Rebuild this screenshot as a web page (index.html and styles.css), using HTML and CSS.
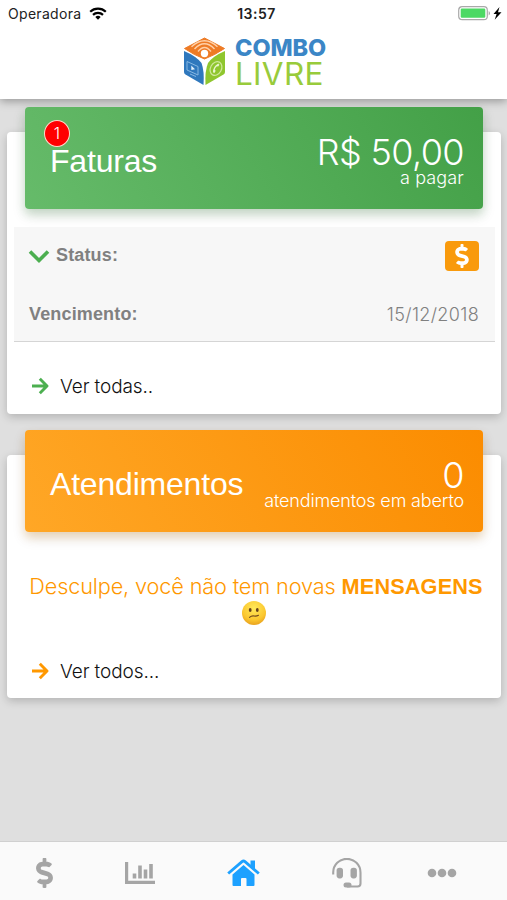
FILE: index.html
```html
<!DOCTYPE html>
<html lang="pt-BR">
<head>
<meta charset="utf-8">
<title>Combo Livre</title>
<link rel="stylesheet" href="styles.css">
</head>
<body>
<svg class="defs" width="0" height="0">
  <symbol id="dollar" viewBox="0 0 288 512"><path fill="currentColor" d="M209.2 233.4l-108-31.6C88.7 198.2 80 186.5 80 173.5c0-16.3 13.2-29.5 29.5-29.5h66.3c12.2 0 24.2 3.7 34.2 10.5 6.1 4.1 14.3 3.1 19.5-2l34.8-34c7.1-6.9 6.1-18.4-1.8-24.5C238 74.8 207.4 64.1 176 64V16c0-8.8-7.2-16-16-16h-32c-8.800 0-16 7.200-16 16v48h-2.500C45.800 64-5.400 118.700.500 183.600c4.200 46.100 39.400 83.600 83.800 96.600l102.500 30c12.500 3.700 21.200 15.300 21.200 28.300 0 16.300-13.200 29.500-29.500 29.500h-66.300C100 368 88 364.300 78 357.500c-6.100-4.100-14.300-3.100-19.500 2l-34.800 34c-7.100 6.900-6.100 18.400 1.800 24.500 24.500 19.200 55.100 29.900 86.500 30v48c0 8.800 7.200 16 16 16h32c8.800 0 16-7.200 16-16v-48.200c46.600-.900 90.300-28.600 105.700-72.700 21.500-61.600-14.600-124.800-72.500-141.700z"/></symbol>
  <symbol id="arrow" viewBox="0 0 18 18"><path d="M1 9H15.500M8.800 1.800 16 9 8.800 16.200" fill="none" stroke="currentColor" stroke-width="2.900" stroke-linejoin="round"/></symbol>
</svg>
<header class="header">
  <div class="status-bar">
    <div class="carrier"><span>Operadora</span>
      <svg width="18" height="13" viewBox="0 0 18 13"><g fill="none" stroke="#000" stroke-width="2.200"><path d="M1.200 4.800A11.200 11.200 0 0 1 16.800 4.800"/><path d="M4 7.900A7.200 7.200 0 0 1 14 7.900"/></g><path d="M9 12.800 6.300 10.100A3.900 3.900 0 0 1 11.700 10.100Z"/></svg>
    </div>
    <div class="clock">13:57</div>
    <svg class="battery" width="44" height="15" viewBox="0 0 44 15"><rect x=".7" y=".7" width="28.600" height="13" rx="3.500" fill="#fff" stroke="#a9a9a9" stroke-width="1.200"/><rect x="2.700" y="2.600" width="24.600" height="9.200" rx="1.200" fill="#4cd964"/><path d="M30.700 5v4.500q1.300-.8 1.300-2.250T30.700 5" fill="#aaa"/><path d="M41.500 1 35.500 8h3.100l-1.900 5.700L43.500 6.300H40Z"/></svg>
  </div>
  <div class="logo">
    <svg width="43" height="50" viewBox="0 0 43 50">
      <path d="M21.500 1 41.500 11.500Q32 18 21.500 22 11 18 1.500 11.500Z" fill="#ee7b25" stroke="#ee7b25" stroke-linejoin="round"/>
      <path d="M1 14Q13 19 18.500 26 21.500 34 20.500 48L2.500 37.500Q1 36.500 1 35Z" fill="#2f78bd"/>
      <path d="M42 14Q30 19 25 26 21.700 34 22.500 48L40.500 37.500Q42 36.500 42 35Z" fill="#8fc62e"/>
      <circle cx="21.500" cy="16.500" r="3.700" fill="#fff"/>
      <g fill="none" stroke="#ffd0a8" stroke-width="1.400"><path d="M15 14.500Q21.500 6.500 28 14.500"/><path d="M11.500 12Q21.500 1.500 31.500 12"/><path d="M8.500 9.800Q21.500-2.500 34.500 9.800"/></g>
      <g fill="none" stroke="#86b7e2"><path d="M4 24.500 15 29.500V38L4 33Z"/><path d="M7 37 13 39.500"/></g><path d="M8.300 28.500v4.500l3.700-.7Z" fill="#e4f1fc"/>
      <ellipse cx="33" cy="31.500" rx="5.500" ry="7.200" transform="rotate(28 33 31.500)" fill="none" stroke="#cfe89b" stroke-width="1.200"/><path d="M35.300 26.500q-5.500 3-5.300 9l1.800.2.800-2-.9-1.100q.6-2.100 2.200-3.300l1.300.3 1.200-1.800Z" fill="#eaf6cf"/>
    </svg>
    <div class="wordmark"><span class="logo-combo">COMBO</span><span class="logo-livre">LIVRE</span></div>
  </div>
</header>
<main class="content">
  <section class="card invoices">
    <div class="banner green">
      <span class="badge">1</span>
      <h2>Faturas</h2>
      <div class="summary"><span class="amount">R$ 50,00</span><span class="caption">a pagar</span></div>
    </div>
    <div class="details">
      <div class="row status">
        <svg class="chevron" width="22" height="15" viewBox="0 0 22 15"><path d="M2 2.500 11 11.500 20 2.500" fill="none" stroke="#4caf50" stroke-width="3.600"/></svg>
        <b>Status:</b>
        <span class="pay"><svg width="14" height="24"><use href="#dollar"/></svg></span>
      </div>
      <div class="row due"><b>Vencimento:</b><span class="date">15/12/2018</span></div>
    </div>
    <a class="more"><svg class="green-icon" width="18" height="18"><use href="#arrow"/></svg><span>Ver todas..</span></a>
  </section>
  <section class="card tickets">
    <div class="banner orange">
      <h2>Atendimentos</h2>
      <div class="summary"><span class="amount">0</span><span class="caption tight">atendimentos em aberto</span></div>
    </div>
    <div class="message">
      <p><span class="light">Desculpe, você não tem novas</span> <b>MENSAGENS</b></p>
      <svg width="26" height="26" viewBox="0 0 26 26"><defs><radialGradient id="face" cx=".5" cy=".3" r=".75"><stop offset="0" stop-color="#ffe95b"/><stop offset=".65" stop-color="#fbc72f"/><stop offset="1" stop-color="#e59a1b"/></radialGradient></defs><circle cx="13" cy="13" r="12" fill="url(#face)"/><ellipse cx="9.200" cy="10" rx="1.400" ry="1.900" fill="#65401b"/><ellipse cx="16.300" cy="10" rx="1.400" ry="1.900" fill="#65401b"/><path d="M8.500 17.300Q10.500 15.600 13 16T17.500 15.300" fill="none" stroke="#73491c" stroke-width="1.100" stroke-linecap="round"/></svg>
    </div>
    <a class="more"><svg class="orange-icon" width="18" height="18"><use href="#arrow"/></svg><span>Ver todos...</span></a>
  </section>
</main>
<nav class="tabs">
  <a><svg width="17" height="30"><use href="#dollar"/></svg></a>
  <a><svg width="30" height="24" viewBox="0 0 30 24"><path d="M1.600 1V21.400H30" fill="none" stroke="currentColor" stroke-width="3.200"/><path d="M9.500 12.500V17.500M15 4.500V17.500M20.500 8.500V17.500M26 3V17.500" stroke="currentColor" stroke-width="3.600"/></svg></a>
  <a class="active"><svg width="33" height="28" viewBox="0 0 33 28"><path d="M1.200 14.500 15 2.700Q16.500 1.500 18 2.700L31.800 14.500" fill="none" stroke="currentColor" stroke-width="2.900"/><path d="M5.500 15.500 16.500 6 27.500 15.500V26Q27.500 27 26.500 27H19.500V20Q19.500 19 18.500 19H15Q14 19 14 20V27H6.500Q5.500 27 5.500 26ZM23.500 1.500H28V11L23.500 7Z" fill="currentColor"/></svg></a>
  <a><svg width="30" height="30" viewBox="0 0 30 30"><path d="M1.200 16.500V14.500A13.500 13.500 0 0 1 28.500 14.500V25.500Q28.500 28.500 25.500 28.500H15" fill="none" stroke="currentColor" stroke-width="2.100"/><rect x="4.600" y="9.800" width="6.400" height="10.600" rx="2.800" fill="currentColor"/><rect x="18.500" y="9.800" width="6.400" height="10.600" rx="2.800" fill="currentColor"/><rect x="11.500" y="24.500" width="8" height="5" rx="2.500" fill="currentColor"/></svg></a>
  <a><svg width="30" height="10" viewBox="0 0 30 10" fill="currentColor"><circle cx="5" cy="5" r="4.300"/><circle cx="15" cy="5" r="4.300"/><circle cx="25" cy="5" r="4.300"/></svg></a>
</nav>
</body>
</html>
```
FILE: styles.css
```css
* { box-sizing: border-box; }
body { margin: 0; height: 900px; overflow: hidden; display: flex; flex-direction: column; background: #dfdfdf; font-family: "Liberation Sans", Arial, sans-serif; color: #222; }
svg { display: block; flex: none; }
.defs { position: absolute; }
.header { height: 99px; background: #fff; box-shadow: 0 2px 9px rgba(0,0,0,.35); }
.status-bar { height: 27px; padding: 0 5px 0 8px; display: grid; grid-template-columns: 1fr auto 1fr; align-items: center; }
.carrier { display: flex; align-items: center; gap: 8px; font: 14px Inter, sans-serif; letter-spacing: .3px; }
.clock { font: 600 14px Inter, sans-serif; letter-spacing: .5px; padding-left: 3px; }
.battery { justify-self: end; }
.logo { margin: 10px 0 0 183px; display: flex; gap: 9px; }
.wordmark { display: flex; flex-direction: column; font-family: Inter, sans-serif; white-space: nowrap; }
.logo-combo { height: 22px; font-size: 23.500px; line-height: 22px; font-weight: 800; letter-spacing: -.1px; color: #3b86c6; }
.logo-livre { height: 30px; font-size: 31.500px; line-height: 30px; font-weight: 400; letter-spacing: .3px; color: #98cb3b; }
.content { flex: 1; padding: 33px 6px 0 7px; }
.card { background: #fff; border-radius: 4px; box-shadow: 0 3px 10px rgba(0,0,0,.2); display: flow-root; }
.invoices { height: 282px; }
.tickets { height: 243px; margin-top: 41px; }
.banner { position: relative; height: 102px; margin: -25px 18px 0; padding: 0 19px 0 25px; border-radius: 4px; display: flex; justify-content: space-between; color: #fff; }
.green { background: linear-gradient(60deg, #66bb6a, #43a047); box-shadow: 0 6px 14px rgba(0,0,0,.13), 0 5px 10px rgba(76,175,80,.2); }
.orange { background: linear-gradient(60deg, #ffa726, #fb8c00); box-shadow: 0 6px 14px rgba(0,0,0,.12), 0 5px 10px rgba(255,152,0,.2); }
h2 { margin: 35px 0 0; font-size: 32px; line-height: 38px; font-weight: 400; letter-spacing: -.2px; }
.badge { position: absolute; left: 19px; top: 13px; width: 26px; height: 27px; border: 1.500px solid #ffd9ca; border-radius: 50%; background: #f00; font: 300 16px/24px Inter, sans-serif; text-align: center; }
.summary { display: flex; flex-direction: column; align-items: flex-end; font-family: Inter, sans-serif; font-weight: 300; }
.amount { margin-top: 28px; font-size: 36px; line-height: 34px; letter-spacing: -.6px; }
.caption { font-size: 18px; line-height: 18px; letter-spacing: .15px; }
.tight { letter-spacing: -.15px; }
.details { margin: 18px 6px 0 7px; height: 115px; background: #f7f7f7; border-bottom: 1px solid #d5d5d5; color: #808080; font-size: 18px; letter-spacing: .15px; }
.row { height: 58px; padding: 0 16px 0 14px; display: flex; align-items: center; }
.status b { margin-bottom: 2px; }
.chevron { margin-right: 6px; }
.pay { margin-left: auto; width: 34px; height: 30px; border-radius: 4px; background: #f99a0c; color: #fff; display: grid; place-items: center; }
.due { padding-left: 15px; justify-content: space-between; }
.date { font: 300 18px Inter, sans-serif; letter-spacing: .35px; }
.more { display: flex; align-items: center; gap: 11px; height: 24px; margin: 32px 0 0 24px; font: 300 19px Inter, sans-serif; letter-spacing: -.1px; color: #111; }
.green-icon { color: #4caf50; }
.orange-icon { color: #ff9800; }
.message { margin-top: 41px; display: flex; flex-direction: column; align-items: center; color: #ff9800; font-size: 21.700px; }
.message p { margin: 0; line-height: 26px; white-space: nowrap; padding-left: 4px; }
.message .light { font-family: Inter, sans-serif; font-weight: 300; letter-spacing: -.14px; }
.tickets .more { margin-top: 33px; }
.message b { letter-spacing: .15px; }
.tabs { height: 59px; background: #fafafa; border-top: 1px solid #d0d0d0; display: grid; grid-template-columns: 89px 101px 106px 101px 90px; color: #a5a5a5; }
.tabs a { display: grid; place-items: center; padding-top: 4px; }
.tabs .active { color: #1da1ff; }
```
